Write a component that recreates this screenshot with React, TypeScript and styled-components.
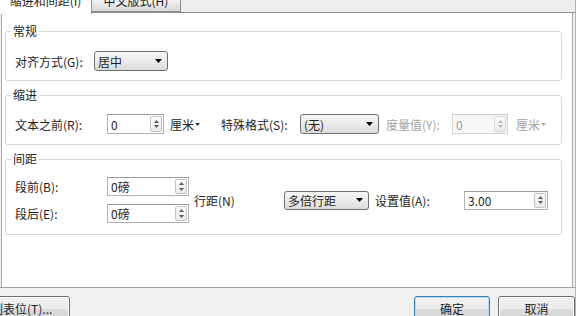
import React from "react";
import styled, { createGlobalStyle } from "styled-components";

const GlobalStyle = createGlobalStyle`
  html, body {
    margin: 0;
    padding: 0;
    background: #f0f0f0;
  }
  body {
    font-family: "Noto Sans CJK SC", "Noto Sans", sans-serif;
    font-size: 12px;
    color: #1e1e1e;
  }
`;

const Window = styled.div`
  width: 576px;
  height: 316px;
  display: flex;
  flex-direction: column;
  overflow: hidden;
  background: #f0f0f0;
  box-sizing: border-box;
  border-right: 1px solid #b4b4b4;
`;

const TabBar = styled.div`
  height: 12px;
  display: flex;
  align-items: flex-start;
  background: #ededed;
  border-top: 1px solid #f8f8f8;
  border-bottom: 1px solid #8c8c8c;
  box-sizing: content-box;
  margin-top: -1px;
`;

const Tab = styled.div<{ $active?: boolean; $width: number }>`
  width: ${(p) => p.$width}px;
  height: ${(p) => (p.$active ? 14 : 12)}px;
  box-sizing: border-box;
  overflow: hidden;
  display: flex;
  justify-content: center;
  background: ${(p) =>
    p.$active ? "#ffffff" : "linear-gradient(#f3f3f3, #d9d9d9)"};
  border-right: 1px solid #8e8e8e;
  border-bottom: ${(p) => (p.$active ? "none" : "1px solid #8e8e8e")};
  position: relative;
  z-index: ${(p) => (p.$active ? 1 : 0)};
`;

const TabText = styled.span`
  line-height: 14px;
  margin-top: -6px;
  white-space: nowrap;
`;

const Panel = styled.div`
  flex: 1;
  margin: 0 2px 0 1px;
  background: #ffffff;
  border-left: 1px solid #aaaaaa;
  border-right: 1px solid #a8a8a8;
  padding: 11px 10px 0 3px;
  display: flex;
  flex-direction: column;
  gap: 7px;
`;

const Group = styled.fieldset<{ $pt: number; $pb: number }>`
  margin: 0;
  padding: ${(p) => p.$pt}px 10px ${(p) => p.$pb}px 9px;
  border: 1px solid #d5d5d5;
  border-radius: 3px;
  min-width: 0;
`;

const Legend = styled.legend`
  margin-left: -4px;
  padding: 0 2px;
  line-height: 14px;
  font-size: 12px;
`;

const Row = styled.div`
  display: flex;
  align-items: center;
`;

const Label = styled.span<{ $w: number; $ml?: number; $disabled?: boolean }>`
  width: ${(p) => p.$w}px;
  margin-left: ${(p) => p.$ml ?? 0}px;
  flex-shrink: 0;
  white-space: nowrap;
  color: ${(p) => (p.$disabled ? "#a3a3a3" : "inherit")};
`;

const SelectBox = styled.div<{ $w: number; $h?: number }>`
  width: ${(p) => p.$w}px;
  height: ${(p) => p.$h ?? 20}px;
  box-sizing: border-box;
  border: 1px solid #6f6f6f;
  border-radius: 3px;
  background: linear-gradient(#f7f7f7 0%, #ececec 45%, #dcdcdc 100%);
  display: flex;
  align-items: center;
  justify-content: space-between;
  padding: 0 5px 0 3px;
  flex-shrink: 0;
`;

const SpinBox = styled.div<{ $w: number; $h?: number; $disabled?: boolean }>`
  width: ${(p) => p.$w}px;
  height: ${(p) => p.$h ?? 20}px;
  box-sizing: border-box;
  border: 1px solid ${(p) => (p.$disabled ? "#d2d2d2" : "#b3b3b3")};
  border-top-color: ${(p) => (p.$disabled ? "#c8c8c8" : "#9a9a9a")};
  background: ${(p) => (p.$disabled ? "#f6f6f6" : "#ffffff")};
  color: ${(p) => (p.$disabled ? "#9a9a9a" : "inherit")};
  display: flex;
  align-items: stretch;
  flex-shrink: 0;
`;

const SpinValue = styled.span`
  flex: 1;
  display: flex;
  align-items: center;
  padding-left: 3px;
  white-space: nowrap;
`;

const SpinButtons = styled.div<{ $disabled?: boolean }>`
  width: 12px;
  margin: 1px;
  border: 1px solid ${(p) => (p.$disabled ? "#dadada" : "#c4c4c4")};
  border-radius: 2px;
  background: linear-gradient(#fbfbfb, #e9e9e9);
  display: flex;
  flex-direction: column;
  align-items: center;
  justify-content: space-evenly;
  box-sizing: border-box;
`;

const Unit = styled.span<{ $ml: number; $w?: number; $disabled?: boolean }>`
  margin-left: ${(p) => p.$ml}px;
  width: ${(p) => (p.$w ? `${p.$w}px` : "auto")};
  flex-shrink: 0;
  display: flex;
  align-items: center;
  gap: 1px;
  color: ${(p) => (p.$disabled ? "#a3a3a3" : "inherit")};
`;

const SpacingGrid = styled.div`
  display: grid;
  grid-template-columns: 92px 82px;
  row-gap: 8px;
  align-items: center;
`;

const Footer = styled.div`
  height: 29px;
  box-sizing: border-box;
  border-top: 1px solid #a0a0a0;
  background: #f0f0f0;
  display: flex;
  justify-content: space-between;
  align-items: flex-start;
  padding-top: 8px;
`;

const ButtonGroup = styled.div`
  display: flex;
  gap: 8px;
`;

const Button = styled.div<{ $w: number; $focused?: boolean; $ml?: number }>`
  width: ${(p) => p.$w}px;
  height: 26px;
  margin-left: ${(p) => p.$ml ?? 0}px;
  box-sizing: border-box;
  border: 1px solid ${(p) => (p.$focused ? "#3c7fb1" : "#707070")};
  border-radius: 3px;
  background: linear-gradient(#f2f2f2 0%, #ebebeb 50%, #dddddd 51%, #cfcfcf 100%);
  box-shadow: ${(p) =>
    p.$focused ? "inset 0 0 0 1px #a9dcf6" : "inset 0 0 0 1px #fcfcfc"};
  display: flex;
  align-items: center;
  justify-content: center;
  padding-bottom: 2px;
  white-space: nowrap;
`;

const LeftButton = styled(Button)`
  justify-content: flex-start;
  padding-left: 5px;
`;

const DropArrow = ({ color = "#000" }: { color?: string }) => (
  <svg width="7" height="4" viewBox="0 0 7 4">
    <path d="M0 0 H7 L3.5 4 Z" fill={color} />
  </svg>
);

const SmallArrow = ({ color = "#333" }: { color?: string }) => (
  <svg width="5" height="3" viewBox="0 0 5 3">
    <path d="M0 0 H5 L2.5 3 Z" fill={color} />
  </svg>
);

const Spinner = ({ disabled }: { disabled?: boolean }) => {
  const c = disabled ? "#b8b8b8" : "#5a5a5a";
  return (
    <SpinButtons $disabled={disabled}>
      <svg width="5" height="3" viewBox="0 0 5 3">
        <path d="M0 3 H5 L2.5 0 Z" fill={c} />
      </svg>
      <svg width="5" height="3" viewBox="0 0 5 3">
        <path d="M0 0 H5 L2.5 3 Z" fill={c} />
      </svg>
    </SpinButtons>
  );
};

interface SpinProps {
  value: string;
  width: number;
  height?: number;
  disabled?: boolean;
}

const SpinInput = ({ value, width, height, disabled }: SpinProps) => (
  <SpinBox $w={width} $h={height} $disabled={disabled}>
    <SpinValue>{value}</SpinValue>
    <Spinner disabled={disabled} />
  </SpinBox>
);

interface SelectProps {
  value: string;
  width: number;
  height?: number;
}

const Select = ({ value, width, height }: SelectProps) => (
  <SelectBox $w={width} $h={height}>
    <span>{value}</span>
    <DropArrow />
  </SelectBox>
);

const App = () => (
  <>
    <GlobalStyle />
    <Window>
      <TabBar>
        <Tab $active $width={92}>
          <TabText>缩进和间距(I)</TabText>
        </Tab>
        <Tab $width={89}>
          <TabText>中文版式(H)</TabText>
        </Tab>
      </TabBar>

      <Panel>
        <Group $pt={13} $pb={9}>
          <Legend>常规</Legend>
          <Row>
            <Label $w={79}>对齐方式(G):</Label>
            <Select value="居中" width={74} />
          </Row>
        </Group>

        <Group $pt={12} $pb={10}>
          <Legend>缩进</Legend>
          <Row>
            <Label $w={92}>文本之前(R):</Label>
            <SpinInput value="0" width={57} />
            <Unit $ml={6} $w={51}>
              厘米
              <SmallArrow />
            </Unit>
            <Label $w={79}>特殊格式(S):</Label>
            <Select value="(无)" width={79} />
            <Label $w={66} $ml={7} $disabled>
              度量值(Y):
            </Label>
            <SpinInput value="0" width={56} disabled />
            <Unit $ml={8} $disabled>
              厘米
              <SmallArrow color="#b0b0b0" />
            </Unit>
          </Row>
        </Group>

        <Group $pt={11} $pb={11}>
          <Legend>间距</Legend>
          <Row>
            <SpacingGrid>
              <Label $w={92}>段前(B):</Label>
              <SpinInput value="0磅" width={82} height={19} />
              <Label $w={92}>段后(E):</Label>
              <SpinInput value="0磅" width={82} height={19} />
            </SpacingGrid>
            <Label $w={90} $ml={5}>
              行距(N)
            </Label>
            <Select value="多倍行距" width={85} height={19} />
            <Label $w={89} $ml={6}>
              设置值(A):
            </Label>
            <SpinInput value="3.00" width={84} height={19} />
          </Row>
        </Group>
      </Panel>

      <Footer>
        <LeftButton $w={85} $ml={-15}>
          制表位(T)...
        </LeftButton>
        <ButtonGroup>
          <Button $w={76} $focused>
            确定
          </Button>
          <Button $w={77}>取消</Button>
        </ButtonGroup>
      </Footer>
    </Window>
  </>
);

export default App;
